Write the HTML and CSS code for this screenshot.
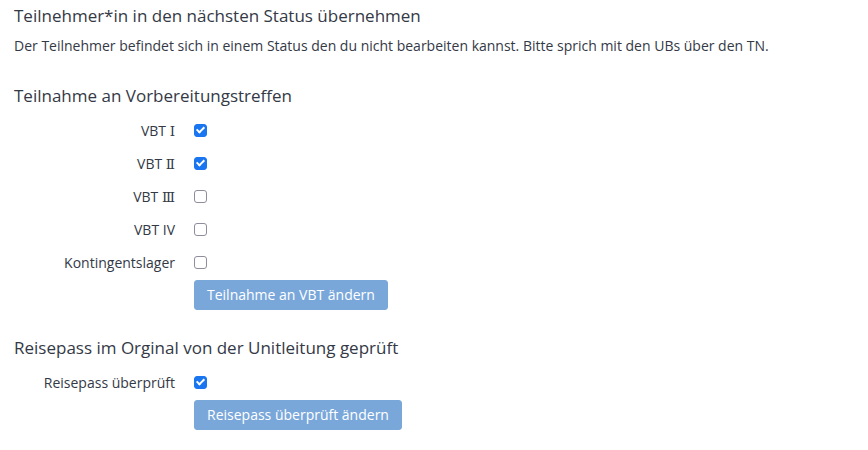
FILE: index.html
```html
<!DOCTYPE html>
<html lang="de">
<head>
<meta charset="utf-8">
<link rel="stylesheet" href="styles.css">
</head>
<body>
<div class="page">
  <section class="section first">
    <h2 class="title">Teilnehmer*in in den nächsten Status übernehmen</h2>
    <p class="note">Der Teilnehmer befindet sich in einem Status den du nicht bearbeiten kannst. Bitte sprich mit den UBs über den TN.</p>
  </section>
  <section class="section">
    <h2 class="title">Teilnahme an Vorbereitungstreffen</h2>
    <div class="form">
      <label class="lbl" for="v1">VBT <span class="num">Ⅰ</span></label><div class="ctl"><input id="v1" class="cb" type="checkbox" checked></div>
      <label class="lbl" for="v2">VBT <span class="num">Ⅱ</span></label><div class="ctl"><input id="v2" class="cb" type="checkbox" checked></div>
      <label class="lbl" for="v3">VBT <span class="num">Ⅲ</span></label><div class="ctl"><input id="v3" class="cb" type="checkbox"></div>
      <label class="lbl" for="v4">VBT IV</label><div class="ctl"><input id="v4" class="cb" type="checkbox"></div>
      <label class="lbl" for="v5">Kontingentslager</label><div class="ctl"><input id="v5" class="cb" type="checkbox"></div>
      <div></div><div class="btnrow"><button class="btn" type="button">Teilnahme an VBT ändern</button></div>
    </div>
  </section>
  <section class="section pass">
    <h2 class="title">Reisepass im Orginal von der Unitleitung geprüft</h2>
    <div class="form">
      <label class="lbl" for="r1">Reisepass überprüft</label><div class="ctl"><input id="r1" class="cb" type="checkbox" checked></div>
      <div></div><div class="btnrow"><button class="btn" type="button">Reisepass überprüft ändern</button></div>
    </div>
  </section>
</div>
</body>
</html>
```
FILE: styles.css
```css
html, body { margin: 0; padding: 0; background: #fff; }
body { font-family: "Open Sans", "Noto Sans", sans-serif; color: #343946; }
.page { padding: 4px 14px 0 14px; }
.section { margin-top: 28px; }
.section.first { margin-top: 0; }
.section.pass { margin-top: 26px; }
.title { font-size: 17px; font-weight: 400; margin: 0; line-height: 24px; }
.note { font-size: 14px; margin: 8px 0 0; line-height: 20px; }
.form { display: grid; grid-template-columns: 161px auto; column-gap: 19px; margin-top: 6px; }
.lbl { font-size: 14px; text-align: right; line-height: 33px; height: 33px; }
.num { font-family: "DejaVu Serif", "Liberation Serif", serif; font-size: 13.5px; }
.ctl { display: flex; align-items: center; height: 33px; }
.cb { appearance: none; -webkit-appearance: none; margin: 0; width: 13px; height: 13px; border: 1.5px solid #8f8d9b; border-radius: 3px; box-sizing: border-box; background: #fff; position: relative; }
.cb:checked { background: #1a75f0; border-color: #1a75f0; }
.cb:checked::after { content: ""; position: absolute; left: 2.5px; top: -0.5px; width: 3px; height: 6px; border: solid #fff; border-width: 0 2px 2px 0; transform: rotate(45deg); }
.btnrow { padding-top: 1px; }
.btn { font-family: inherit; font-size: 14px; color: #fff; background: #7aa7da; border: 1px solid #7aa7da; border-radius: 3px; padding: 0 12px; height: 30px; line-height: 28px; }
```
